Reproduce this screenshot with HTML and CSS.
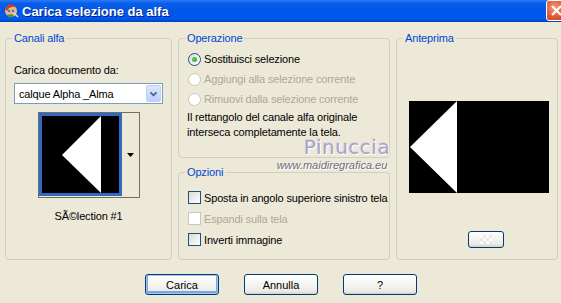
FILE: index.html
```html
<!DOCTYPE html>
<html lang="it">
<head>
    <meta charset="UTF-8">
    <title>Carica selezione da alfa</title>
    <link rel="stylesheet" href="styles.css">
</head>
<body>
<div class="window">
    <div class="titlebar">
        <svg class="app-icon" width="16" height="16" viewBox="0 0 16 16">
            <circle cx="8" cy="8" r="6" fill="#f2b48a"/>
            <path d="M2 6 L6 1 L10 2 L14 5 L12 4 L9 4 L6 5 L4 8 Z" fill="#c8401c"/>
            <circle cx="6" cy="8" r="1.3" fill="#2f7fd8"/>
            <circle cx="10" cy="8" r="1.3" fill="#2f7fd8"/>
            <path d="M3 12 L7 15 L11 13 L13 15 L9 11 Z" fill="#3c9a3c"/>
            <path d="M11 10 L15 14" stroke="#e8e0c0" stroke-width="1.5"/>
        </svg>
        <span class="title">Carica selezione da alfa</span>
        <span class="close-btn">
            <svg width="21" height="21" viewBox="0 0 21 21">
                <path d="M6 6 L15 15 M15 6 L6 15" stroke="#fff" stroke-width="2.2"/>
            </svg>
        </span>
    </div>

    <div class="content">
        <fieldset class="group group-left">
            <legend>Canali alfa</legend>
            <div class="field-label">Carica documento da:</div>
            <div class="combo">
                <span class="combo-text">calque Alpha _Alma</span>
                <span class="combo-btn">
                    <svg width="15" height="16" viewBox="0 0 15 16">
                        <path d="M4 6 L7.5 9.5 L11 6" fill="none" stroke="#4d6185" stroke-width="2"/>
                    </svg>
                </span>
            </div>
            <div class="thumb">
                <div class="thumb-img">
                    <svg width="77" height="77" viewBox="0 0 77 77">
                        <rect width="77" height="77" fill="#000"/>
                        <polygon points="20,39 59,0 59,77" fill="#fff"/>
                    </svg>
                </div>
                <div class="thumb-drop">
                    <svg width="7" height="4" viewBox="0 0 7 4"><polygon points="0,0 7,0 3.5,4" fill="#000"/></svg>
                </div>
            </div>
            <div class="caption">SÃ©lection #1</div>
        </fieldset>

        <div class="middle">
            <fieldset class="group group-op">
                <legend>Operazione</legend>
                <div class="opt">
                    <span class="radio checked"></span>
                    <span>Sostituisci selezione</span>
                </div>
                <div class="opt disabled">
                    <span class="radio"></span>
                    <span>Aggiungi alla selezione corrente</span>
                </div>
                <div class="opt disabled">
                    <span class="radio"></span>
                    <span>Rimuovi dalla selezione corrente</span>
                </div>
                <p class="note">Il rettangolo del canale alfa originale<br>interseca completamente la tela.</p>
            </fieldset>

            <fieldset class="group group-opz">
                <legend>Opzioni</legend>
                <div class="opt check-row">
                    <span class="check"></span>
                    <span>Sposta in angolo superiore sinistro tela</span>
                </div>
                <div class="opt check-row disabled">
                    <span class="check"></span>
                    <span>Espandi sulla tela</span>
                </div>
                <div class="opt check-row">
                    <span class="check"></span>
                    <span>Inverti immagine</span>
                </div>
            </fieldset>
        </div>

        <fieldset class="group group-right">
            <legend>Anteprima</legend>
            <div class="preview">
                <svg width="140" height="92" viewBox="0 0 140 92">
                    <rect width="140" height="92" fill="#000"/>
                    <polygon points="1,46 48,0 48,92" fill="#fff"/>
                </svg>
            </div>
            <div class="bg-btn"><span class="checker"></span></div>
        </fieldset>
    </div>

    <div class="buttons">
        <button class="btn default">Carica</button>
        <button class="btn">Annulla</button>
        <button class="btn">?</button>
    </div>

    <div class="watermark">
        <div class="wm-name">Pinuccia</div>
        <div class="wm-url">www.maidiregrafica.eu</div>
    </div>
</div>
</body>
</html>
```

FILE: styles.css
```css
body {
    margin: 0;
    background: #ece9d8;
    font-family: "Liberation Sans", Arial, sans-serif;
    font-size: 11px;
    letter-spacing: -0.15px;
    color: #000;
}
.window {
    position: relative;
    width: 561px;
    height: 303px;
    overflow: hidden;
    background: #ece9d8;
}

/* title bar */
.titlebar {
    height: 22px;
    display: flex;
    align-items: center;
    background: linear-gradient(#2a7cf5 0%, #0a5ee9 15%, #0056e6 50%, #0058ee 85%, #003fc4 100%);
}
.app-icon {
    margin-left: 3px;
    margin-right: 3px;
}
.title {
    flex: 1;
    color: #fff;
    font-weight: bold;
    font-size: 13px;
    letter-spacing: 0;
    text-shadow: 1px 1px 0 #0a1e80;
}
.close-btn {
    width: 21px;
    height: 21px;
    margin-right: -6px;
    margin-top: -1px;
    border: 1px solid #fff;
    border-radius: 3px;
    box-sizing: border-box;
    background: radial-gradient(circle at 40% 35%, #f09a80, #e35a32 55%, #c5401c);
    display: flex;
}
.close-btn svg {
    margin: -1px;
}

/* layout */
.content {
    display: grid;
    grid-template-columns: 167px 212px 162px;
    column-gap: 6px;
    height: 228px;
    padding: 10px 0 0 5px;
}
.middle {
    display: flex;
    flex-direction: column;
    gap: 8px;
}

/* group boxes */
.group {
    margin: 0;
    padding: 0;
    min-width: 0;
    border: 1px solid #d0d0bf;
    border-radius: 4px;
}
.group legend {
    margin-left: 6px;
    padding: 0 2px;
    color: #0046d5;
    font-size: 11px;
    line-height: 13px;
}
.group-op {
    height: 126px;
    box-sizing: border-box;
}
.group-opz {
    flex: 1;
}

/* left group */
.field-label {
    margin: 19px 0 0 8px;
    line-height: 13px;
}
.combo {
    display: flex;
    align-items: center;
    justify-content: space-between;
    margin: 6px 0 0 8px;
    width: 149px;
    height: 21px;
    box-sizing: border-box;
    border: 1px solid #7f9db9;
    background: #fff;
}
.combo-text {
    padding-left: 4px;
}
.combo-btn {
    width: 15px;
    height: 17px;
    margin-right: 1px;
    box-sizing: border-box;
    border: 1px solid #b9d1fa;
    border-radius: 2px;
    background: linear-gradient(#dbe6fd, #bcd0f9);
    display: flex;
}
.thumb {
    display: flex;
    width: 102px;
    height: 86px;
    margin: 8px auto 0;
    box-sizing: border-box;
    border: 1px solid #716f64;
    background: #ece9d8;
}
.thumb-img {
    width: 83px;
    height: 83px;
    box-sizing: border-box;
    border: 3px solid #316ac5;
}
.thumb-img svg {
    display: block;
}
.thumb-drop {
    flex: 1;
    display: flex;
    align-items: center;
    justify-content: center;
}
.caption {
    margin-top: 12px;
    text-align: center;
    line-height: 13px;
}

/* radios and checks */
.opt {
    display: flex;
    align-items: center;
    gap: 3px;
    height: 20px;
    padding-left: 9px;
    white-space: nowrap;
}
.group-op .opt:first-of-type {
    margin-top: 4px;
}
.opt.disabled {
    color: #aca899;
}
.radio {
    width: 13px;
    height: 13px;
    box-sizing: border-box;
    border: 1px solid #1c5180;
    border-radius: 50%;
    background: linear-gradient(135deg, #dcdad5, #fff);
    display: flex;
    align-items: center;
    justify-content: center;
}
.radio.checked::after {
    content: "";
    width: 5px;
    height: 5px;
    border-radius: 50%;
    background: radial-gradient(circle at 40% 40%, #5fd35f, #21a121);
}
.disabled .radio {
    border-color: #cac8bb;
    background: #fff;
}
.note {
    margin: 1px 0 0 8px;
    line-height: 15px;
}
.check-row {
    height: 21px;
}
.check-row:first-of-type {
    margin-top: 8px;
}
.check {
    flex: none;
    width: 13px;
    height: 13px;
    box-sizing: border-box;
    border: 1px solid #1c5180;
    background: linear-gradient(135deg, #dcdad5, #fff);
}
.disabled .check {
    border-color: #cac8bb;
    background: #fff;
}

/* preview */
.preview {
    margin: 56px 0 0 12px;
}
.preview svg {
    display: block;
}
.bg-btn {
    width: 36px;
    height: 17px;
    margin: 38px 0 0 71px;
    box-sizing: border-box;
    border: 1px solid #003c74;
    border-radius: 3px;
    background: linear-gradient(#fff, #ecebe6 80%, #d6d0c5);
    display: flex;
    align-items: center;
    justify-content: center;
}
.checker {
    width: 12px;
    height: 9px;
    background: conic-gradient(#e8e8e8 25%, #fff 0 50%, #e8e8e8 0 75%, #fff 0);
    background-size: 6px 6px;
}

/* buttons */
.buttons {
    display: flex;
    justify-content: center;
    gap: 25px;
    margin-top: 14px;
    padding-left: 1px;
}
.btn {
    width: 74px;
    height: 21px;
    padding: 0;
    font-family: "Liberation Sans", Arial, sans-serif;
    font-size: 11px;
    color: #000;
    border: 1px solid #003c74;
    border-radius: 3px;
    background: linear-gradient(#fff, #f4f4f0 50%, #ecebe6 85%, #d6d0c5);
}
.btn.default {
    box-shadow: inset 0 0 0 1px #a7c3f2, inset 0 -1px 0 2px #7ca4e6;
}

/* watermark */
.watermark {
    position: absolute;
    left: 270px;
    top: 135px;
    width: 124px;
    text-align: center;
    pointer-events: none;
}
.wm-name {
    padding-left: 30px;
    font-family: "DejaVu Sans", sans-serif;
    font-size: 20px;
    line-height: 24px;
    letter-spacing: 0.5px;
    color: #a7a5c2;
    text-shadow: 1px 1px 0 #fff, -1px -1px 0 #d8d6e6;
}
.wm-url {
    font-family: "Liberation Sans", Arial, sans-serif;
    font-style: italic;
    font-size: 11px;
    line-height: 12px;
    letter-spacing: 0;
    color: #6e6c84;
    text-shadow: 1px 1px 0 #fff;
}
```
